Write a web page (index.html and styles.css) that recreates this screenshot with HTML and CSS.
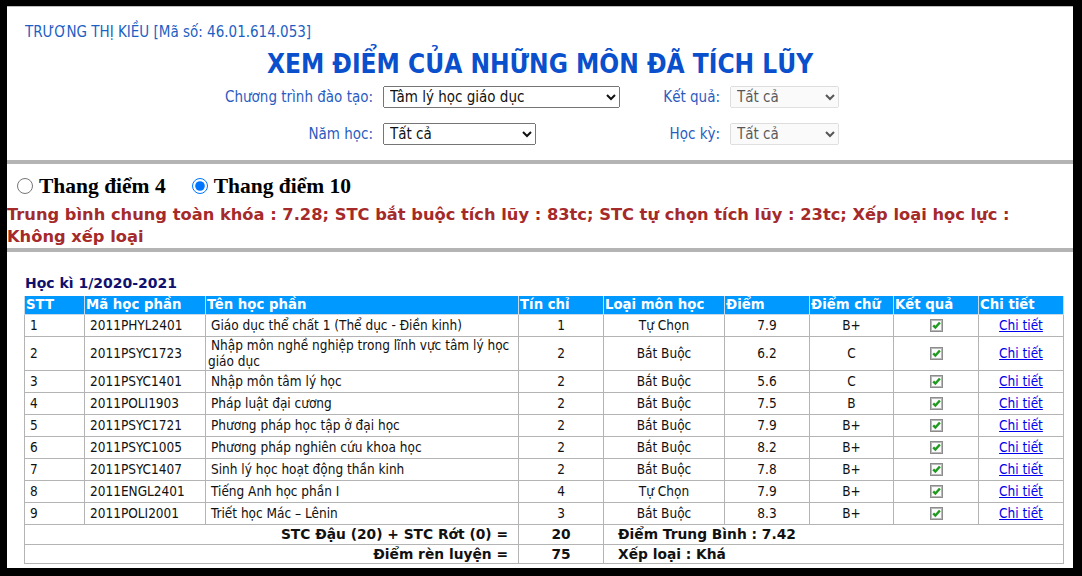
FILE: index.html
```html
<!DOCTYPE html>
<html lang="vi">
<head>
<meta charset="utf-8">
<title>Xem điểm</title>
<link rel="stylesheet" href="styles.css">
</head>
<body>
<div class="frame">
  <div class="student">TRƯƠNG THỊ KIỀU [Mã số: 46.01.614.053]</div>
  <h1 class="title">XEM ĐIỂM CỦA NHỮNG MÔN ĐÃ TÍCH LŨY</h1>
  <div class="filters">
    <label class="flabel">Chương trình đào tạo:</label>
    <div class="fcell"><select class="sel sel-wide"><option>Tâm lý học giáo dục</option></select></div>
    <label class="flabel">Kết quả:</label>
    <div class="fcell"><select class="sel sel-small" disabled><option>Tất cả</option></select></div>
    <label class="flabel">Năm học:</label>
    <div class="fcell"><select class="sel sel-mid"><option>Tất cả</option></select></div>
    <label class="flabel">Học kỳ:</label>
    <div class="fcell"><select class="sel sel-small" disabled><option>Tất cả</option></select></div>
  </div>
  <div class="rule rule-top"></div>
  <div class="scale">
    <label class="scale-opt"><input type="radio" name="scale" class="radio">Thang điểm 4</label>
    <label class="scale-opt"><input type="radio" name="scale" class="radio" checked>Thang điểm 10</label>
  </div>
  <div class="summary">Trung bình chung toàn khóa : 7.28; STC bắt buộc tích lũy : 83tc; STC tự chọn tích lũy : 23tc; Xếp loại học lực : Không xếp loại</div>
  <div class="rule"></div>
  <div class="semester">
    <div class="sem-title">Học kì 1/2020-2021</div>
    <table class="grades">
      <colgroup>
        <col class="c-stt"><col class="c-ma"><col class="c-ten"><col class="c-tc"><col class="c-loai"><col class="c-diem"><col class="c-chu"><col class="c-kq"><col class="c-ct">
      </colgroup>
      <thead>
        <tr><th>STT</th><th>Mã học phần</th><th>Tên học phần</th><th>Tín chỉ</th><th>Loại môn học</th><th>Điểm</th><th>Điểm chữ</th><th>Kết quả</th><th>Chi tiết</th></tr>
      </thead>
      <tbody>
        <tr><td>1</td><td>2011PHYL2401</td><td class="name">Giáo dục thể chất 1 (Thể dục - Điền kinh)</td><td class="ctr">1</td><td class="ctr">Tự Chọn</td><td class="ctr">7.9</td><td class="ctr">B+</td><td class="ctr"><svg class="chk" viewBox="0 0 13 13" width="13" height="13"><rect x="0.5" y="0.5" width="12" height="12" fill="#fff" stroke="#8c8c8c"/><rect x="1.5" y="1.5" width="10" height="10" fill="#fbfbfb" stroke="#b8b8b8"/><path d="M3.2 6.3 L5.4 8.6 L9.9 3.5" fill="none" stroke="#1f9a1f" stroke-width="2.4"/></svg></td><td class="ctr"><a href="#">Chi tiết</a></td></tr>
        <tr><td>2</td><td>2011PSYC1723</td><td class="name">Nhập môn nghề nghiệp trong lĩnh vực tâm lý học giáo dục</td><td class="ctr">2</td><td class="ctr">Bắt Buộc</td><td class="ctr">6.2</td><td class="ctr">C</td><td class="ctr"><svg class="chk" viewBox="0 0 13 13" width="13" height="13"><rect x="0.5" y="0.5" width="12" height="12" fill="#fff" stroke="#8c8c8c"/><rect x="1.5" y="1.5" width="10" height="10" fill="#fbfbfb" stroke="#b8b8b8"/><path d="M3.2 6.3 L5.4 8.6 L9.9 3.5" fill="none" stroke="#1f9a1f" stroke-width="2.4"/></svg></td><td class="ctr"><a href="#">Chi tiết</a></td></tr>
        <tr><td>3</td><td>2011PSYC1401</td><td class="name">Nhập môn tâm lý học</td><td class="ctr">2</td><td class="ctr">Bắt Buộc</td><td class="ctr">5.6</td><td class="ctr">C</td><td class="ctr"><svg class="chk" viewBox="0 0 13 13" width="13" height="13"><rect x="0.5" y="0.5" width="12" height="12" fill="#fff" stroke="#8c8c8c"/><rect x="1.5" y="1.5" width="10" height="10" fill="#fbfbfb" stroke="#b8b8b8"/><path d="M3.2 6.3 L5.4 8.6 L9.9 3.5" fill="none" stroke="#1f9a1f" stroke-width="2.4"/></svg></td><td class="ctr"><a href="#">Chi tiết</a></td></tr>
        <tr><td>4</td><td>2011POLI1903</td><td class="name">Pháp luật đại cương</td><td class="ctr">2</td><td class="ctr">Bắt Buộc</td><td class="ctr">7.5</td><td class="ctr">B</td><td class="ctr"><svg class="chk" viewBox="0 0 13 13" width="13" height="13"><rect x="0.5" y="0.5" width="12" height="12" fill="#fff" stroke="#8c8c8c"/><rect x="1.5" y="1.5" width="10" height="10" fill="#fbfbfb" stroke="#b8b8b8"/><path d="M3.2 6.3 L5.4 8.6 L9.9 3.5" fill="none" stroke="#1f9a1f" stroke-width="2.4"/></svg></td><td class="ctr"><a href="#">Chi tiết</a></td></tr>
        <tr><td>5</td><td>2011PSYC1721</td><td class="name">Phương pháp học tập ở đại học</td><td class="ctr">2</td><td class="ctr">Bắt Buộc</td><td class="ctr">7.9</td><td class="ctr">B+</td><td class="ctr"><svg class="chk" viewBox="0 0 13 13" width="13" height="13"><rect x="0.5" y="0.5" width="12" height="12" fill="#fff" stroke="#8c8c8c"/><rect x="1.5" y="1.5" width="10" height="10" fill="#fbfbfb" stroke="#b8b8b8"/><path d="M3.2 6.3 L5.4 8.6 L9.9 3.5" fill="none" stroke="#1f9a1f" stroke-width="2.4"/></svg></td><td class="ctr"><a href="#">Chi tiết</a></td></tr>
        <tr><td>6</td><td>2011PSYC1005</td><td class="name">Phương pháp nghiên cứu khoa học</td><td class="ctr">2</td><td class="ctr">Bắt Buộc</td><td class="ctr">8.2</td><td class="ctr">B+</td><td class="ctr"><svg class="chk" viewBox="0 0 13 13" width="13" height="13"><rect x="0.5" y="0.5" width="12" height="12" fill="#fff" stroke="#8c8c8c"/><rect x="1.5" y="1.5" width="10" height="10" fill="#fbfbfb" stroke="#b8b8b8"/><path d="M3.2 6.3 L5.4 8.6 L9.9 3.5" fill="none" stroke="#1f9a1f" stroke-width="2.4"/></svg></td><td class="ctr"><a href="#">Chi tiết</a></td></tr>
        <tr><td>7</td><td>2011PSYC1407</td><td class="name">Sinh lý học hoạt động thần kinh</td><td class="ctr">2</td><td class="ctr">Bắt Buộc</td><td class="ctr">7.8</td><td class="ctr">B+</td><td class="ctr"><svg class="chk" viewBox="0 0 13 13" width="13" height="13"><rect x="0.5" y="0.5" width="12" height="12" fill="#fff" stroke="#8c8c8c"/><rect x="1.5" y="1.5" width="10" height="10" fill="#fbfbfb" stroke="#b8b8b8"/><path d="M3.2 6.3 L5.4 8.6 L9.9 3.5" fill="none" stroke="#1f9a1f" stroke-width="2.4"/></svg></td><td class="ctr"><a href="#">Chi tiết</a></td></tr>
        <tr><td>8</td><td>2011ENGL2401</td><td class="name">Tiếng Anh học phần I</td><td class="ctr">4</td><td class="ctr">Tự Chọn</td><td class="ctr">7.9</td><td class="ctr">B+</td><td class="ctr"><svg class="chk" viewBox="0 0 13 13" width="13" height="13"><rect x="0.5" y="0.5" width="12" height="12" fill="#fff" stroke="#8c8c8c"/><rect x="1.5" y="1.5" width="10" height="10" fill="#fbfbfb" stroke="#b8b8b8"/><path d="M3.2 6.3 L5.4 8.6 L9.9 3.5" fill="none" stroke="#1f9a1f" stroke-width="2.4"/></svg></td><td class="ctr"><a href="#">Chi tiết</a></td></tr>
        <tr><td>9</td><td>2011POLI2001</td><td class="name">Triết học Mác – Lênin</td><td class="ctr">3</td><td class="ctr">Bắt Buộc</td><td class="ctr">8.3</td><td class="ctr">B+</td><td class="ctr"><svg class="chk" viewBox="0 0 13 13" width="13" height="13"><rect x="0.5" y="0.5" width="12" height="12" fill="#fff" stroke="#8c8c8c"/><rect x="1.5" y="1.5" width="10" height="10" fill="#fbfbfb" stroke="#b8b8b8"/><path d="M3.2 6.3 L5.4 8.6 L9.9 3.5" fill="none" stroke="#1f9a1f" stroke-width="2.4"/></svg></td><td class="ctr"><a href="#">Chi tiết</a></td></tr>
      </tbody>
      <tfoot>
        <tr><td colspan="3" class="tot-label">STC Đậu (20) + STC Rớt (0) =</td><td class="ctr">20</td><td colspan="5" class="tot-info">Điểm Trung Bình : 7.42</td></tr>
        <tr><td colspan="3" class="tot-label">Điểm rèn luyện =</td><td class="ctr">75</td><td colspan="5" class="tot-info">Xếp loại : Khá</td></tr>
      </tfoot>
    </table>
  </div>
</div>
</body>
</html>
```

FILE: styles.css
```css
html, body {
  margin: 0;
  padding: 0;
  background: #000;
}

body {
  width: 1082px;
  height: 576px;
  overflow: hidden;
  font-family: "DejaVu Sans Condensed", "DejaVu Sans", sans-serif;
}

.frame {
  margin: 6px 9px 8px 7px;
  height: 562px;
  background: #fff;
  border-top: 1px solid #bdbdbd;
  box-sizing: border-box;
}

.student {
  padding: 16px 0 0 18px;
  font-size: 15px;
  line-height: 18px;
  color: #1c5fc4;
}

.title {
  margin: 8px 0 0 0;
  text-align: center;
  font-size: 26px;
  line-height: 30px;
  font-weight: bold;
  color: #0a4fcc;
}

.filters {
  display: grid;
  grid-template-columns: 376px 237px 110px 109px;
  grid-auto-rows: 22px;
  row-gap: 15px;
  margin-top: 7px;
}

.flabel {
  text-align: right;
  padding-right: 10px;
  font-size: 15px;
  line-height: 22px;
  color: #2a5cbf;
}

.fcell {
  display: flex;
}

.sel {
  height: 22px;
  font-family: "DejaVu Sans Condensed", "DejaVu Sans", sans-serif;
  font-size: 15px;
  padding: 0 2px;
  color: #111;
}

.sel-wide { width: 237px; }
.sel-mid { width: 153px; }
.sel-small { width: 109px; }

.rule {
  height: 4px;
  background: #b4b4b4;
}

.rule-top {
  margin-top: 15px;
}

.scale {
  display: flex;
  align-items: center;
  gap: 25px;
  padding: 9px 0 0 9px;
  font-family: "Liberation Serif", serif;
  font-weight: bold;
  font-size: 21.5px;
  line-height: 26px;
  color: #000;
}

.scale-opt {
  display: flex;
  align-items: center;
}

.radio {
  width: 16px;
  height: 16px;
  margin: 0 6px 0 1px;
}

.summary {
  font-family: "DejaVu Sans", sans-serif;
  font-size: 16.3px;
  line-height: 22px;
  font-weight: bold;
  color: #a52a2a;
  padding: 5px 40px 0 0;
}

.semester {
  padding: 22px 10px 0 17px;
}

.sem-title {
  padding-left: 1px;
  margin-bottom: 4px;
  font-family: "DejaVu Sans", sans-serif;
  font-size: 14px;
  line-height: 18px;
  font-weight: bold;
  color: #10106e;
}

.grades {
  width: 1039px;
  border-collapse: collapse;
  table-layout: fixed;
  font-size: 13.5px;
  line-height: 15.5px;
  color: #111;
}

.c-stt { width: 60px; }
.c-ma { width: 121px; }
.c-ten { width: 313px; }
.c-tc { width: 85px; }
.c-loai { width: 121px; }
.c-diem { width: 85px; }
.c-chu { width: 84px; }
.c-kq { width: 85px; }
.c-ct { width: 85px; }

.grades th {
  background: #0099ff;
  color: #fff;
  font-family: "DejaVu Sans", sans-serif;
  font-size: 13.3px;
  line-height: 16px;
  font-weight: bold;
  text-align: left;
  padding: 1px 1px 1px 1px;
  border: 1px solid #c9d9e6;
  border-top: none;
}

.grades td {
  border: 1px solid #b4b4b4;
  padding: 1px 1px 1px 5px;
  vertical-align: middle;
}

.grades td.name {
  padding-left: 2px;
  text-indent: 3px;
}

.grades td.ctr {
  text-align: center;
  padding-left: 1px;
}

.grades a {
  color: #0000ee;
  text-decoration: underline;
}

.chk {
  display: inline-block;
  vertical-align: middle;
  margin: 3px 0;
}

.grades tfoot td {
  font-family: "DejaVu Sans", sans-serif;
  font-weight: bold;
  font-size: 13.8px;
  line-height: 16.5px;
  color: #111;
}

.grades td.tot-label {
  text-align: right;
  padding-right: 10px;
}

.grades td.tot-info {
  padding-left: 14px;
}
```
